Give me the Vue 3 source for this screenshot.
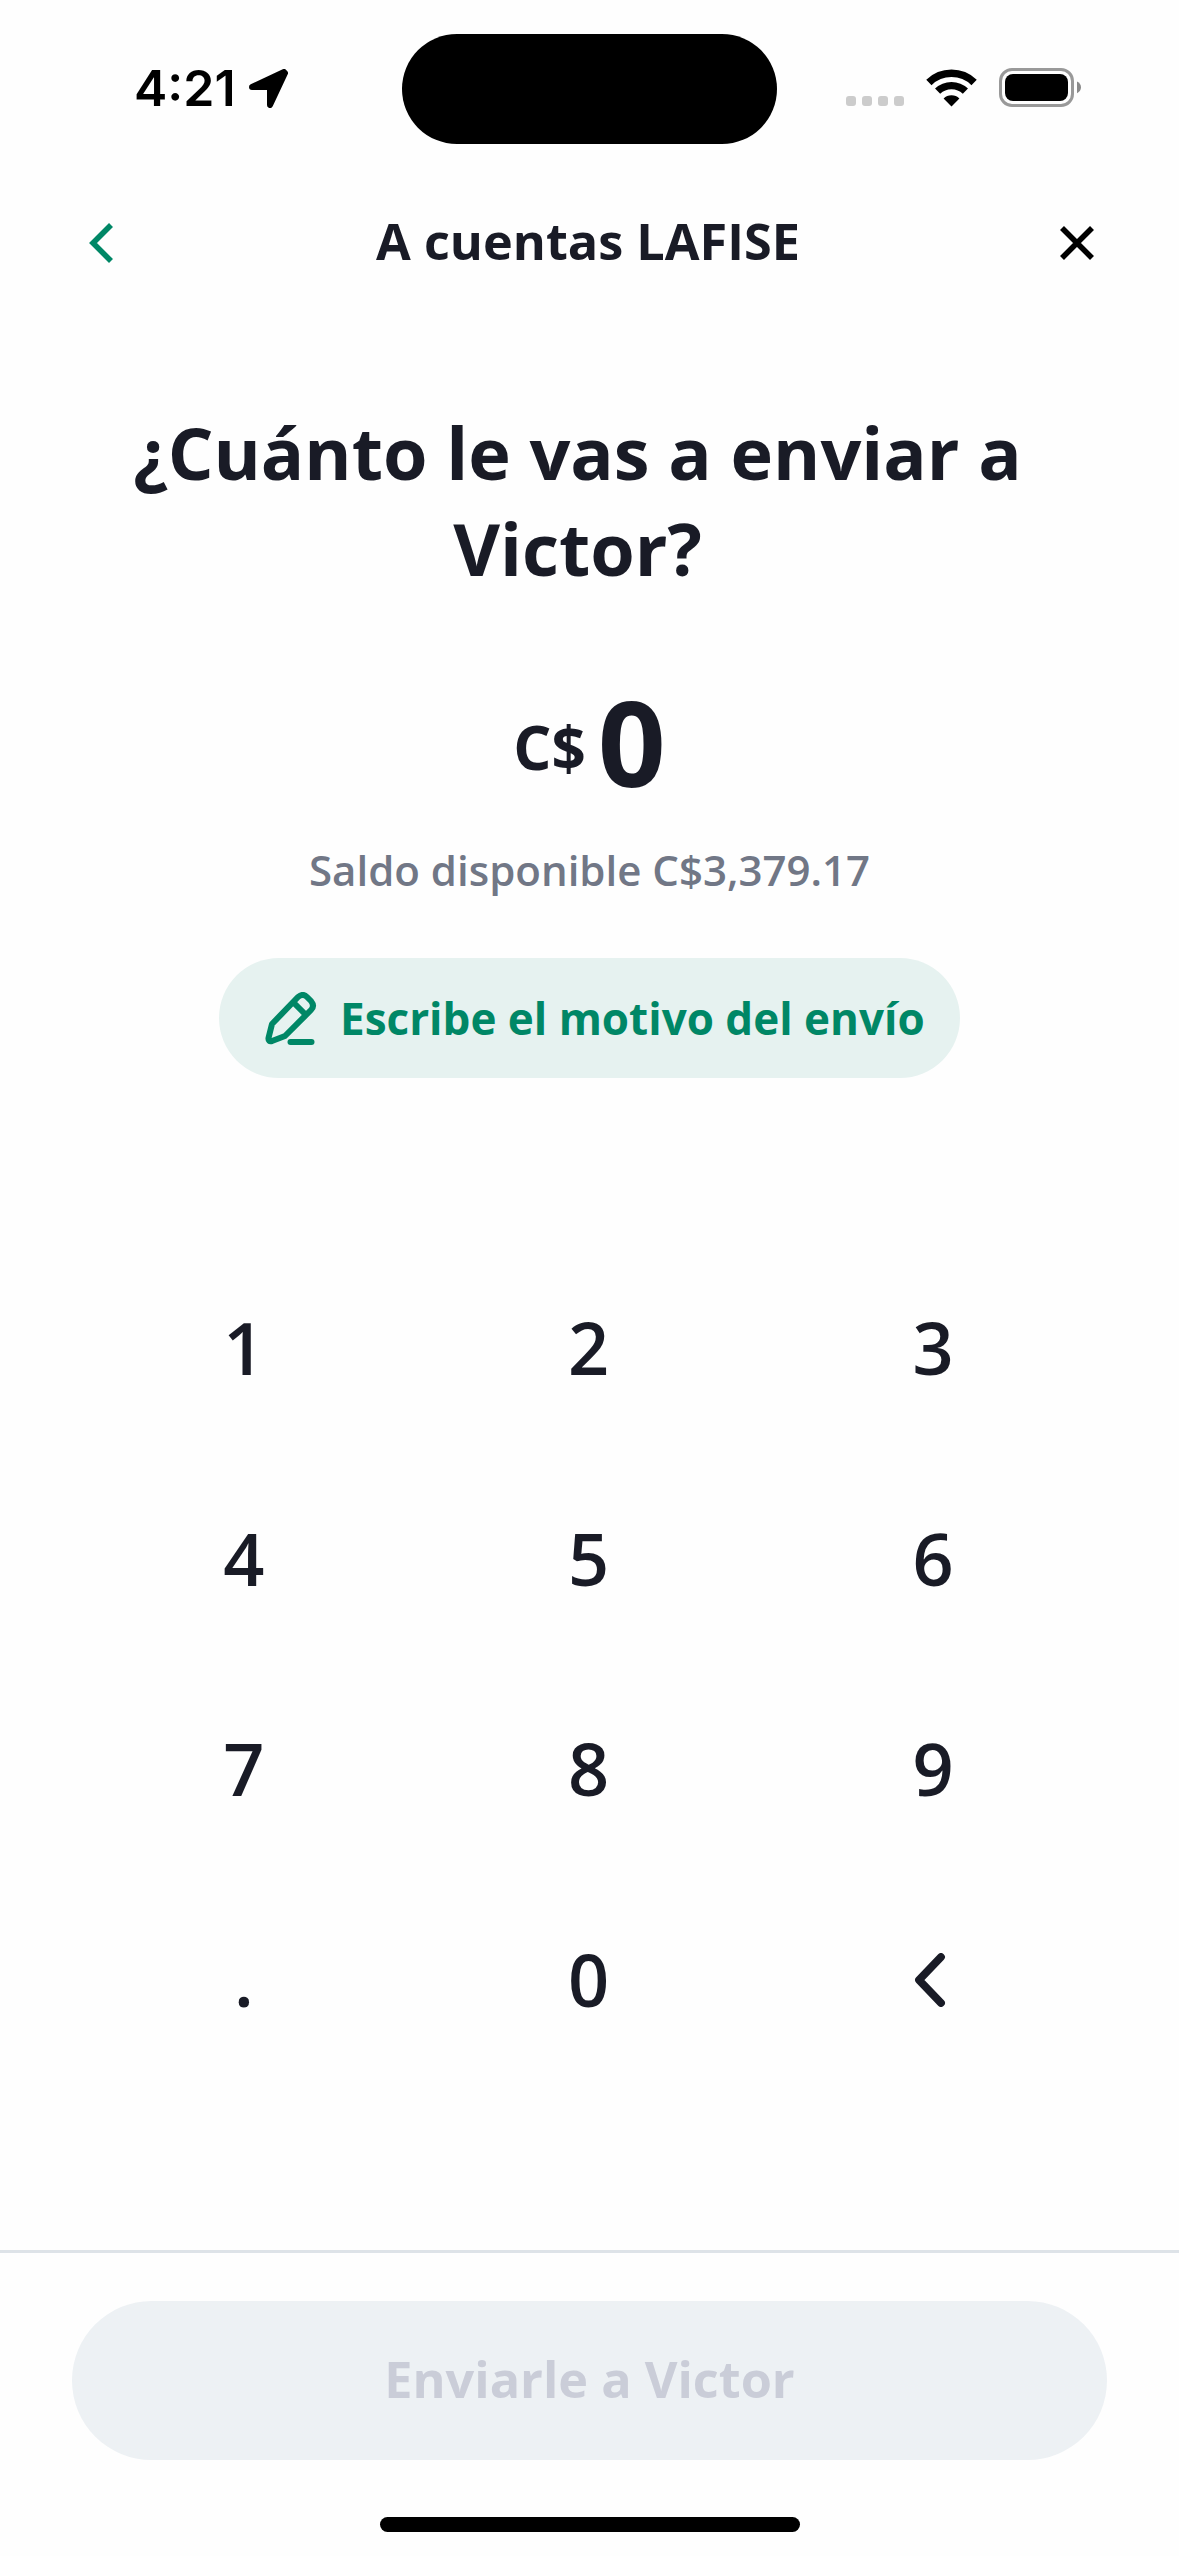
<script setup>
const keys = ['1', '2', '3', '4', '5', '6', '7', '8', '9', '.', '0', 'back']
</script>

<template>
  <div class="screen">
    <div class="status">
      <div class="status-left">
        <span class="time">4:21</span>
        <svg class="location" width="39" height="39" viewBox="0 0 39 39">
          <path d="M3 18 L35 3 L36 4 L21 36 L21 18 Z" fill="#000" stroke="#000" stroke-width="6" stroke-linejoin="round" />
        </svg>
      </div>
      <div class="island"></div>
      <div class="status-right">
        <div class="signal"><i></i><i></i><i></i><i></i></div>
        <svg class="wifi" width="51" height="38" viewBox="0 0 51 38">
          <g fill="none" stroke="#000">
            <path d="M2.9 13.4 A32.5 32.5 0 0 1 48.1 13.4" stroke-width="7.6" />
            <path d="M11.6 22.2 A20 20 0 0 1 39.4 22.2" stroke-width="7.4" />
          </g>
          <path d="M25.5 37.5 L17.6 29.6 A11.2 11.2 0 0 1 33.4 29.6 Z" fill="#000" />
        </svg>
        <svg class="battery" width="83" height="39" viewBox="0 0 83 39">
          <rect x="1.5" y="1.5" width="72" height="36" rx="11.5" fill="none" stroke="#999" stroke-width="3" />
          <rect x="6" y="6" width="63" height="27" rx="8" fill="#000" />
          <path d="M78 13.5 Q82 15.5 82 19.3 Q82 23.2 78 25.2 Z" fill="#8a8a8a" />
        </svg>
      </div>
    </div>

    <header class="nav">
      <svg width="26" height="40" viewBox="0 0 26 40">
        <path d="M23 2 L5 20 L23 38" fill="none" stroke="#008766" stroke-width="5.6" />
      </svg>
      <h2>A cuentas LAFISE</h2>
      <svg width="36" height="36" viewBox="0 0 36 36">
        <path d="M3 3 L33 33 M33 3 L3 33" fill="none" stroke="#000" stroke-width="5.6" />
      </svg>
    </header>

    <h1>¿Cuánto le vas a enviar a<br>Victor?</h1>

    <div class="amount"><span class="currency">C$</span><span class="value">0</span></div>
    <p class="balance">Saldo disponible C$3,379.17</p>

    <button class="reason">
      <svg width="52" height="54" viewBox="0 0 52 54" fill="none" stroke="#008766" stroke-width="6" stroke-linecap="round" stroke-linejoin="round">
        <path d="M33 5 Q38 1 42 5 L46 9 Q50 14 46 18 L20 44 L7 49 Q3 50 3.5 46 L7 32 Z M30 12 L40 22" />
        <path d="M25.5 50 H46.5" />
      </svg>
      <span>Escribe el motivo del envío</span>
    </button>

    <div class="keypad">
      <button v-for="key in keys" :key="key" class="key">
        <svg v-if="key === 'back'" width="32" height="54" viewBox="0 0 32 54">
          <path d="M27 4 L5 27 L27 50" fill="none" stroke="#191b26" stroke-width="7.8" stroke-linecap="round" stroke-linejoin="round" />
        </svg>
        <span v-else>{{ key }}</span>
      </button>
    </div>

    <footer class="footer">
      <button class="submit">Enviarle a Victor</button>
      <div class="home"></div>
    </footer>
  </div>
</template>

<style>
body { margin: 0; background: #fefefe; }
</style>

<style scoped>
.screen {
  box-sizing: border-box;
  width: 1179px;
  height: 2556px;
  display: flex;
  flex-direction: column;
  align-items: center;
  overflow: hidden;
  background: #fefefe;
  color: #191b26;
  font-family: "Open Sans", "Noto Sans", sans-serif;
}
button { border: 0; padding: 0; margin: 0; background: none; color: inherit; font-family: inherit; }
h1, h2, p { margin: 0; }
svg { display: block; flex: none; }

.status {
  box-sizing: border-box;
  width: 100%;
  height: 182px;
  padding: 34px 96px 0 134px;
  display: flex;
  align-items: flex-start;
}
.status-left { width: 268px; height: 109px; display: flex; align-items: center; gap: 15px; }
.time {
  font: 600 50px/60px Inter, sans-serif;
  color: #000;
  width: 100px;
  padding-bottom: 2px;
  white-space: nowrap;
}
.island { width: 375px; height: 110px; border-radius: 55px; background: #000; }
.status-right { flex: 1; height: 107px; display: flex; align-items: center; }
.signal { display: flex; gap: 6px; margin: 27px 22px 0 69px; }
.signal i { width: 10px; height: 10px; border-radius: 3px; background: #ccc; }
.battery { margin-left: 22px; }

.nav {
  box-sizing: border-box;
  width: 100%;
  height: 122px;
  padding: 0 84px 0 88px;
  display: flex;
  align-items: center;
  justify-content: space-between;
}
.nav h2 { font-size: 50.4px; line-height: 70px; font-weight: 700; padding-bottom: 4px; margin-left: 3px; white-space: nowrap; }

h1 {
  width: 1035px;
  margin-top: 100px;
  margin-right: 24px;
  text-align: center;
  font-size: 72px;
  line-height: 96px;
  font-weight: 700;
  white-space: nowrap;
}
.amount { height: 160px; margin-top: 63px; display: flex; align-items: center; }
.currency { font-size: 60px; line-height: 80px; font-weight: 700; padding-top: 15px; margin-right: 12px; }
.value { font-size: 119px; line-height: 160px; font-weight: 700; padding-top: 3px; }
.balance { margin-top: 19px; font-size: 42px; line-height: 64px; font-weight: 600; color: #717786; white-space: nowrap; }

.reason {
  box-sizing: border-box;
  width: 741px;
  height: 120px;
  margin-top: 56px;
  padding-left: 46px;
  display: flex;
  align-items: center;
  border-radius: 60px;
  background: #e6f2f0;
  color: #008766;
  font-size: 44px;
  line-height: 60px;
  font-weight: 700;
}
.reason svg { margin-top: 2px; }
.reason span { margin-left: 23px; white-space: nowrap; }

.keypad {
  width: 1034px;
  height: 842px;
  margin-top: 164px;
  margin-right: 2px;
  display: grid;
  grid-template-columns: repeat(3, 1fr);
  grid-template-rows: repeat(4, 1fr);
}
.key { display: flex; align-items: center; justify-content: center; font-size: 72px; line-height: 96px; font-weight: 600; }
.key svg { margin: 2px 6px 0 0; }

.footer {
  box-sizing: border-box;
  width: 100%;
  margin-top: auto;
  height: 306px;
  padding-top: 48px;
  border-top: 3px solid #dee3e8;
  display: flex;
  flex-direction: column;
  align-items: center;
}
.submit {
  width: 1035px;
  height: 159px;
  padding-bottom: 4px;
  border-radius: 80px;
  background: #edf1f4;
  color: #cacdd8;
  font-size: 50.4px;
  line-height: 70px;
  font-weight: 700;
}
.home { width: 420px; height: 15px; margin-top: 57px; border-radius: 8px; background: #000; }
</style>
